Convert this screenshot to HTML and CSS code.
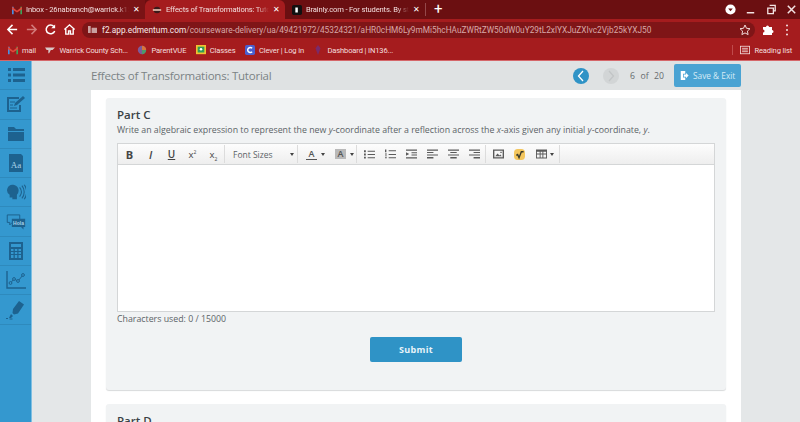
FILE: index.html
```html
<!DOCTYPE html>
<html lang="en">
<head>
    <meta charset="utf-8" />
    <title>Effects of Transformations: Tutorial</title>
    <link rel="stylesheet" href="styles.css">
</head>
<body>
    <header class="chrome">
        <div class="tabstrip">
            <div class="tab">
                <svg class="favicon" viewBox="0 0 12 10"><path d="M0 1h2v9H0z" fill="#4a8fe0"/><path d="M10 1h2v9h-2z" fill="#3fa35a"/><path d="M0 1l6 5 6-5v3L6 8 0 4z" fill="#e2483d"/></svg>
                <span class="tab-title">Inbox - 26nabranch@warrick.k12</span>
                <span class="tab-close">&#x2715;</span>
            </div>
            <div class="tab tab-active">
                <svg class="favicon" viewBox="0 0 12 12"><circle cx="6" cy="6" r="4" fill="#3a1a1a"/><path d="M1 6h10" stroke="#e8c0b0" stroke-width="2"/></svg>
                <span class="tab-title">Effects of Transformations: Tuto</span>
                <span class="tab-close">&#x2715;</span>
            </div>
            <div class="tab">
                <svg class="favicon" viewBox="0 0 12 12"><rect width="12" height="12" rx="2" fill="#111"/><path d="M4 3h3v6H4z" fill="#fff"/></svg>
                <span class="tab-title">Brainly.com - For students. By st</span>
                <span class="tab-close">&#x2715;</span>
            </div>
            <span class="tab-sep"></span>
            <span class="new-tab">+</span>
            <div class="window-btns">
                <svg class="win-icon" viewBox="0 0 14 14"><circle cx="7" cy="7" r="5.5" fill="#fff"/><path d="M4.5 6h5L7 9z" fill="#6b1012"/></svg>
                <svg class="win-icon" viewBox="0 0 14 14"><path d="M3 10.5h8" stroke="#f3e3e3" stroke-width="1.6"/></svg>
                <svg class="win-icon" viewBox="0 0 14 14"><path d="M5 2.5h6v6H9M3 5.5h6v6H3z" fill="none" stroke="#f3e3e3" stroke-width="1.4"/></svg>
                <svg class="win-icon" viewBox="0 0 14 14"><path d="M3 3l8 8M11 3l-8 8" stroke="#f3e3e3" stroke-width="1.6"/></svg>
            </div>
        </div>

        <div class="urlbar">
            <svg class="nav-icon" viewBox="0 0 14 14"><path d="M12 7H2.5M7 2L2 7l5 5" fill="none" stroke="#fff" stroke-width="1.6"/></svg>
            <svg class="nav-icon" viewBox="0 0 14 14"><path d="M2 7h9.5M7 2l5 5-5 5" fill="none" stroke="#d27a7a" stroke-width="1.6"/></svg>
            <svg class="nav-icon" viewBox="0 0 14 14"><path d="M11.5 8.5A4.7 4.7 0 1 1 10.6 3.8" fill="none" stroke="#fff" stroke-width="1.6"/><path d="M12 1.5v4.2H7.8z" fill="#fff"/></svg>
            <svg class="nav-icon" viewBox="0 0 14 14"><path d="M3 6.5V12h3V8.5h2V12h3V6.5M1.5 7L7 2l5.5 5" fill="none" stroke="#fff" stroke-width="1.5"/></svg>
            <div class="omnibox">
                <svg class="site-icon" viewBox="0 0 10 10"><path d="M0 1h3v8H0zM4 3h6v6H4z" fill="#c9a0a0"/></svg>
                <span class="url"><span class="url-host">f2.app.edmentum.com</span>/courseware-delivery/ua/49421972/45324321/aHR0cHM6Ly9mMi5hcHAuZWRtZW50dW0uY29tL2xlYXJuZXIvc2Vjb25kYXJ50</span>
                <svg class="star" viewBox="0 0 12 12"><path d="M6 1l1.5 3.3 3.500.4-2.600 2.400.7 3.500L6 8.900l-3.100 1.700.7-3.500L1 4.700l3.500-.4z" fill="none" stroke="#f0dada" stroke-width="1"/></svg>
            </div>
            <svg class="ext-icon" viewBox="0 0 12 12"><path d="M1 3h3a1.500 1.500 0 0 1 3 0h3v3a1.500 1.500 0 0 1 0 3v2H1V8.500a1.500 1.500 0 0 0 0-3z" fill="#fff"/></svg>
            <svg class="ext-icon" viewBox="0 0 12 12"><path d="M6 1.500v.01M6 6v.01M6 10.500v.01" stroke="#f3e3e3" stroke-width="2" stroke-linecap="round"/></svg>
        </div>

        <div class="bookmarks">
            <span class="bookmark"><svg class="bm-icon" viewBox="0 0 12 10"><path d="M0 1h2v9H0z" fill="#4a8fe0"/><path d="M10 1h2v9h-2z" fill="#3fa35a"/><path d="M0 1l6 5 6-5v3L6 8 0 4z" fill="#e2483d"/></svg>mail</span>
            <span class="bookmark"><svg class="bm-icon" viewBox="0 0 12 10"><path d="M0 2h12L9 5H7L5 9H4V5H2z" fill="#d9c8c8"/></svg>Warrick County Sch...</span>
            <span class="bookmark"><svg class="bm-icon" viewBox="0 0 12 12"><circle cx="6" cy="6" r="5" fill="#7d5a9a"/><path d="M6 6V1a5 5 0 0 1 5 5z" fill="#d9753a"/><path d="M6 6h5a5 5 0 0 1-5 5z" fill="#4d9a6a"/></svg>ParentVUE</span>
            <span class="bookmark"><svg class="bm-icon" viewBox="0 0 12 12"><rect width="12" height="11" fill="#f2c230"/><rect x="2" y="2" width="8" height="7" fill="#2f9e57"/><circle cx="6" cy="5" r="1.500" fill="#fff"/></svg>Classes</span>
            <span class="bookmark"><svg class="bm-icon" viewBox="0 0 12 12"><rect width="12" height="12" rx="2" fill="#4a5fd0"/><path d="M8.500 4a3 3 0 1 0 0 4" fill="none" stroke="#fff" stroke-width="1.800"/></svg>Clever | Log in</span>
            <span class="bookmark"><svg class="bm-icon" viewBox="0 0 12 12"><path d="M6 0l3 4-3 8-3-8z" fill="#7a2a6a"/></svg>Dashboard | IN136...</span>
            <span class="bookmark reading-list"><svg class="bm-icon" viewBox="0 0 12 12"><rect x=".5" y="1.500" width="11" height="9" fill="none" stroke="#f0dada"/><path d="M2.500 4h7M2.500 6h7M2.500 8h7" stroke="#f0dada"/></svg>Reading list</span>
        </div>
    </header>

    <div class="app">
        <nav class="rail">
            <a class="rail-item"><svg viewBox="0 0 20 20"><path d="M2 3h3v3H2zM2 8.500h3v3H2zM2 14h3v3H2zM7 3h12v3H7zM7 8.500h12v3H7zM7 14h12v3H7z" fill="#1d628f"/></svg></a>
            <a class="rail-item"><svg viewBox="0 0 20 20"><path d="M14 11v6H2V4h11" fill="none" stroke="#1d628f" stroke-width="2"/><path d="M8 12l1-3 8-7 2 2-8 7z" fill="#1d628f"/><path d="M4 8h5M4 11h3M4 14h7" stroke="#1d628f"/></svg></a>
            <a class="rail-item"><svg viewBox="0 0 20 20"><path d="M2 3h6l2 2h8v2H2zM2 8h16v9H2z" fill="#1d628f"/></svg></a>
            <a class="rail-item"><svg viewBox="0 0 20 20"><path d="M3 1h12l2 2v16H3z" fill="#1d628f"/><text class="glyph-aa" x="10" y="15" text-anchor="middle">Aa</text></svg></a>
            <a class="rail-item"><svg viewBox="0 0 22 20"><path d="M8 2a6.500 6.500 0 0 1 4 11v5H7v-2H4v-3a6 6 0 0 1 4-11z" fill="#1d628f"/><path d="M15 5a8 8 0 0 1 0 10M17.500 3a11 11 0 0 1 0 14M20 2a13 13 0 0 1 0 16" fill="none" stroke="#1d628f" stroke-width="1.200"/></svg></a>
            <a class="rail-item"><svg viewBox="0 0 24 20"><path d="M1.500 1.500h15v9h-9l-3 3v-3h-3z" fill="none" stroke="#1d628f" stroke-width="1.200"/><path d="M7 6h16v10h-2v3l-3-3H7z" fill="#1d628f"/><text class="glyph-hola" x="15" y="13.500" text-anchor="middle">Hola</text></svg></a>
            <a class="rail-item"><svg viewBox="0 0 20 20"><path d="M3 1h14v18H3z" fill="#1d628f"/><path d="M5 3h10v3H5zM5 8h2.500v2H5zM8.800 8h2.500v2H8.800zM12.500 8H15v2h-2.500zM5 11h2.500v2H5zM8.800 11h2.500v2H8.800zM12.500 11H15v2h-2.500zM5 14h2.500v3H5zM8.800 14h2.500v3H8.800zM12.500 14H15v3h-2.500z" fill="#3498cf"/></svg></a>
            <a class="rail-item"><svg viewBox="0 0 20 20"><path d="M1 1v17h19" fill="none" stroke="#1d628f" stroke-width="1.400"/><path d="M4.500 13L8 9l4 2 5-6" fill="none" stroke="#1d628f"/><g fill="#3498cf" stroke="#1d628f"><circle cx="4.500" cy="13" r="1.400"/><circle cx="8" cy="9" r="1.400"/><circle cx="12" cy="11" r="1.400"/><circle cx="17" cy="5" r="1.400"/></g></svg></a>
            <a class="rail-item"><svg viewBox="0 0 20 20"><path d="M13 1l5 3.500-6 9-4 1-1.500-1.500.5-4z" fill="#1d628f"/><path d="M5 14l2 2-2 2H3zM0 18h2v1H0zM3.500 18.500h3v1h-3z" fill="#1d628f"/></svg></a>
        </nav>

        <div class="workspace">
            <div class="topbar">
                <h1 class="lesson-title">Effects of Transformations: Tutorial</h1>
                <div class="pager">
                    <span class="page-btn page-btn-on"><svg viewBox="0 0 16 16"><path d="M10 3L5.500 8l4.500 5" fill="none" stroke="#fff" stroke-width="1.300"/></svg></span>
                    <span class="page-btn page-btn-off"><svg viewBox="0 0 16 16"><path d="M6 3l4.500 5L6 13" fill="none" stroke="#c2c5c6" stroke-width="1.300"/></svg></span>
                    <span class="page-count"><span>6</span><span>of</span><span>20</span></span>
                    <button class="save-exit"><svg viewBox="0 0 12 12"><path d="M1 0h6v3.500H4v5h3V12H1z" fill="#fff"/><path d="M5 4.500h3V2.500L11.500 6 8 9.500v-2H5z" fill="#fff"/></svg>Save &amp; Exit</button>
                </div>
            </div>

            <div class="columns">
                <main class="content">
                    <section class="part">
                        <h2 class="part-title">Part C</h2>
                        <p class="prompt">Write an algebraic expression to represent the new <i>y</i>-coordinate after a reflection across the <i>x</i>-axis given any initial <i>y</i>-coordinate, <i>y</i>.</p>
                        <div class="editor">
                            <div class="toolbar">
                                <div class="tool-group">
                                    <span class="tool tool-b">B</span>
                                    <span class="tool tool-i">I</span>
                                    <span class="tool tool-u">U</span>
                                    <span class="tool tool-s"><span>x<sup>2</sup></span></span>
                                    <span class="tool tool-s"><span>x<sub>2</sub></span></span>
                                </div>
                                <div class="tool-group tool-fonts">
                                    <span class="font-label">Font Sizes</span>
                                    <span class="caret"></span>
                                </div>
                                <div class="tool-group tool-colors">
                                    <span class="color-a">A</span><span class="caret"></span>
                                    <span class="color-a color-a-bg">A</span><span class="caret"></span>
                                </div>
                                <div class="tool-group">
                                    <span class="tool"><svg viewBox="0 0 12 10"><path d="M0 1h2v2H0zM0 4.500h2v2H0zM0 8h2v2H0zM4 1.500h8v1H4zM4 5h8v1H4zM4 8.500h8v1H4z"/></svg></span>
                                    <span class="tool"><svg viewBox="0 0 12 10"><path d="M0 0h1.500v3H0zM0 4.500h2v1H0zM0 6.500h2v1H0zM0 8.500h2v1H0zM4 1h8v1H4zM4 5h8v1H4zM4 8.500h8v1H4z"/></svg></span>
                                    <span class="tool"><svg viewBox="0 0 12 10"><path d="M0 0h12v1.500H0zM6 3h6v1.200H6zM6 5.500h6v1.200H6zM0 8.500h12V10H0zM0 3l3.500 2L0 7z"/></svg></span>
                                    <span class="tool"><svg viewBox="0 0 12 10"><path d="M0 0h12v1.500H0zM0 2.800h7V4H0zM0 5.500h12v1.200H0zM0 8.300h7V10H0z"/></svg></span>
                                    <span class="tool"><svg viewBox="0 0 12 10"><path d="M0 0h12v1.500H0zM2.500 2.800h7V4h-7zM0 5.500h12v1.200H0zM2.500 8.300h7V10h-7z"/></svg></span>
                                    <span class="tool"><svg viewBox="0 0 12 10"><path d="M0 0h12v1.500H0zM5 2.800h7V4H5zM0 5.500h12v1.200H0zM5 8.300h7V10H5z"/></svg></span>
                                </div>
                                <div class="tool-group tool-insert">
                                    <span class="tool"><svg viewBox="0 0 12 10"><path d="M0 0h12v10H0zM1.500 1.500v7h9v-7zM2.500 7.500l2.500-3 2 2 1-1 1.500 2zM8 2.500h1.500V4H8z" fill-rule="evenodd"/></svg></span>
                                    <span class="tool"><svg class="math-icon" viewBox="0 0 12 12"><rect width="12" height="12" rx="4" fill="#f3c65e"/><path d="M2.500 7l1.500-1 1.500 3.500L8 3h2.500" fill="none" stroke="#3a3a2a" stroke-width="1.500"/></svg></span>
                                    <span class="tool tool-table"><svg viewBox="0 0 12 10"><path d="M0 0h12v10H0zM1 2.500V4.500h3V2.500zM5 2.500V4.500h2V2.500zM8 2.500V4.500h3V2.500zM1 5.500V8.800h3V5.500zM5 5.500V8.800h2V5.500zM8 5.500V8.800h3V5.500z" fill-rule="evenodd"/></svg><span class="caret"></span></span>
                                </div>
                            </div>
                            <div class="editable"></div>
                        </div>
                        <p class="char-count">Characters used: 0 / 15000</p>
                        <div class="submit-row">
                            <button class="submit">Submit</button>
                        </div>
                    </section>
                    <section class="part">
                        <h2 class="part-title">Part D</h2>
                    </section>
                </main>
            </div>
        </div>
    </div>
</body>
</html>
```

FILE: styles.css
```css
* {
    box-sizing: border-box;
}

html, body {
    margin: 0;
    height: 422px;
    overflow: hidden;
}

body {
    display: flex;
    flex-direction: column;
    font-family: "Open Sans", "Liberation Sans", sans-serif;
}

/* browser frame */
.chrome {
    font-family: Roboto, "Liberation Sans", sans-serif;
    color: #f3dede;
    font-size: 7.6px;
    letter-spacing: -0.15px;
}

.tabstrip {
    display: flex;
    align-items: center;
    height: 19px;
    padding-left: 5px;
    background: linear-gradient(to right, #7a1315 145px, #6b0f11 145px);
}

.tab {
    display: flex;
    align-items: center;
    width: 140px;
    height: 19px;
    padding: 0 5px 0 7px;
    flex-shrink: 0;
}

.tab-active {
    background: #a51c1e;
    border-radius: 6px 6px 0 0;
}

.favicon {
    width: 10px;
    height: 10px;
    margin-right: 4px;
    flex-shrink: 0;
}

.tab-title {
    flex: 1;
    overflow: hidden;
    white-space: nowrap;
    -webkit-mask-image: linear-gradient(to right, #000 88%, transparent);
    mask-image: linear-gradient(to right, #000 88%, transparent);
}

.tab-close {
    margin-left: 4px;
    color: #fff;
    font-size: 8px;
}

.tab-sep {
    width: 1px;
    height: 13px;
    background: #94484a;
}

.new-tab {
    margin-left: 8px;
    color: #fff;
    font-size: 15px;
    line-height: 19px;
}

.window-btns {
    display: flex;
    align-items: center;
    gap: 7.5px;
    margin-left: auto;
    padding-right: 2px;
}

.win-icon {
    width: 13px;
    height: 13px;
}

.urlbar {
    display: flex;
    align-items: center;
    height: 21px;
    padding: 0 5px 0 6px;
    gap: 6px;
    background: #a51c1e;
}

.nav-icon {
    width: 13px;
    height: 13px;
}

.omnibox {
    display: flex;
    align-items: center;
    width: 673px;
    height: 16px;
    padding: 0 4px 0 6px;
    border-radius: 8px;
    background: #7f1517;
    font-size: 8.3px;
    letter-spacing: 0;
    color: #d8a8a8;
}

.site-icon {
    width: 9px;
    height: 9px;
    margin-right: 5px;
    flex-shrink: 0;
}

.url {
    flex: 1;
    overflow: hidden;
    white-space: nowrap;
}

.url-host {
    color: #f8eaea;
}

.star {
    width: 12px;
    height: 12px;
    flex-shrink: 0;
}

.ext-icon {
    width: 12px;
    height: 12px;
    margin-left: 1px;
}

.bookmarks {
    display: flex;
    align-items: center;
    gap: 9.5px;
    height: 21px;
    padding: 0 8px;
    background: #a51c1e;
    border-bottom: 1px solid #d5676a;
}

.bookmark {
    display: flex;
    align-items: center;
    white-space: nowrap;
}

.bm-icon {
    width: 10px;
    height: 10px;
    margin-right: 4px;
}

.reading-list {
    margin-left: auto;
    padding-left: 7px;
    border-left: 1px solid #c04a4c;
}

/* lesson page */
.app {
    display: flex;
    flex: 1;
    min-height: 0;
}

.rail {
    width: 32px;
    flex-shrink: 0;
    background: #3498cf;
    border-right: 1px solid #7fbfe2;
}

.rail-item {
    display: flex;
    align-items: center;
    justify-content: center;
    height: 29.3px;
    border-bottom: 1px solid #2e8abd;
}

.rail-item svg {
    width: 20px;
    height: 20px;
}

.glyph-aa {
    font-family: "Liberation Serif", serif;
    font-size: 9px;
    fill: #a9d3ea;
}

.glyph-hola {
    font-family: "Liberation Sans", sans-serif;
    font-size: 6px;
    font-weight: bold;
    fill: #a9d3ea;
}

.workspace {
    display: flex;
    flex-direction: column;
    flex: 1;
    min-width: 0;
    background: #e4e7e8;
}

.topbar {
    display: flex;
    align-items: center;
    height: 29px;
    padding-left: 59px;
    flex-shrink: 0;
    background: #dfe2e3;
}

.lesson-title {
    margin: 0;
    font-size: 11.5px;
    letter-spacing: -0.23px;
    font-weight: 400;
    color: #7b8285;
}

.pager {
    display: flex;
    align-items: center;
    margin-left: auto;
    margin-right: 59px;
}

.page-btn {
    width: 16px;
    height: 16px;
    border-radius: 50%;
}

.page-btn svg {
    display: block;
}

.page-btn-on {
    margin-right: 14px;
    background: #2f93c6;
}

.page-btn-off {
    margin-right: 11px;
    background: #d2d5d6;
}

.page-count {
    display: flex;
    gap: 5.5px;
    margin-right: 10px;
    font-size: 8.7px;
    color: #666b6e;
}

.save-exit {
    display: flex;
    align-items: center;
    width: 67px;
    height: 23px;
    margin: 0;
    padding: 0 0 0 6px;
    border: 0;
    border-radius: 2px;
    background: #4aa3d3;
    color: #d6ebf6;
    font-family: "Open Sans", sans-serif;
    font-size: 8.3px;
}

.save-exit svg {
    width: 9px;
    height: 9px;
    margin-right: 4px;
}

.columns {
    display: flex;
    flex: 1;
    min-height: 0;
    padding-left: 59px;
}

.content {
    width: 650px;
    padding: 8px 15px;
    background: #fff;
    overflow: hidden;
}

.part {
    height: 292px;
    margin-bottom: 14px;
    padding: 10px 11px 0;
    border-radius: 3px;
    background: #f1f3f4;
    box-shadow: 0 1px 1px #d8dadb;
}

.part-title {
    margin: 0 0 3px;
    font-size: 11.5px;
    line-height: 13px;
    font-weight: 600;
    color: #3a4145;
}

.prompt {
    margin: 0 0 6px;
    font-size: 8.8px;
    line-height: 13px;
    color: #5c6367;
}

.editor {
    border: 1px solid #d4d6d7;
    background: #fff;
}

.toolbar {
    display: flex;
    align-items: stretch;
    gap: 2px;
    height: 21px;
    padding: 1px;
    background: linear-gradient(#fdfdfd, #eeeeee);
    border-bottom: 1px solid #d4d6d7;
}

.tool-group {
    display: flex;
    align-items: center;
    border-right: 1px solid #dcdcdc;
}

.tool {
    display: flex;
    align-items: center;
    justify-content: center;
    width: 21px;
    height: 100%;
    color: #454545;
    font-size: 9.5px;
}

.tool svg {
    width: 11px;
    height: 10px;
    fill: #5a5a5a;
}

.tool .math-icon {
    width: 11px;
    height: 11px;
}

.tool-b {
    font-weight: 700;
    font-size: 11px;
}

.tool-i {
    font-style: italic;
    font-weight: 600;
    font-size: 11px;
}

.tool-u {
    text-decoration: underline;
    font-weight: 600;
    font-size: 10px;
}

.tool-s sup,
.tool-s sub {
    font-size: 5px;
    line-height: 0;
}

.tool-fonts {
    width: 71px;
    padding: 0 3px 0 6px;
    justify-content: space-between;
}

.font-label {
    font-size: 8.5px;
    color: #5c6367;
}

.tool-colors {
    gap: 4px;
    width: 57px;
    padding-left: 6px;
}

.color-a {
    width: 11px;
    font-size: 9px;
    font-weight: 600;
    line-height: 10px;
    text-align: center;
    color: #555;
    border-bottom: 1px solid #555;
}

.color-a-bg {
    margin-left: 6px;
    background: #b9b9b9;
    border-bottom: 0;
}

.caret {
    width: 0;
    height: 0;
    border-left: 2.5px solid transparent;
    border-right: 2.5px solid transparent;
    border-top: 3px solid #444;
}

.tool-table {
    width: 29px;
    gap: 3px;
}

.editable {
    height: 146px;
}

.char-count {
    margin: 0;
    font-size: 8.8px;
    line-height: 14px;
    color: #5c6367;
}

.submit-row {
    display: flex;
    justify-content: center;
    margin-top: 11px;
}

.submit {
    width: 92px;
    height: 25px;
    border: 0;
    border-radius: 2px;
    background: #2f93c6;
    color: #e8f3f9;
    font-family: "Open Sans", sans-serif;
    font-size: 9px;
    font-weight: 700;
    letter-spacing: 0.3px;
}
```
